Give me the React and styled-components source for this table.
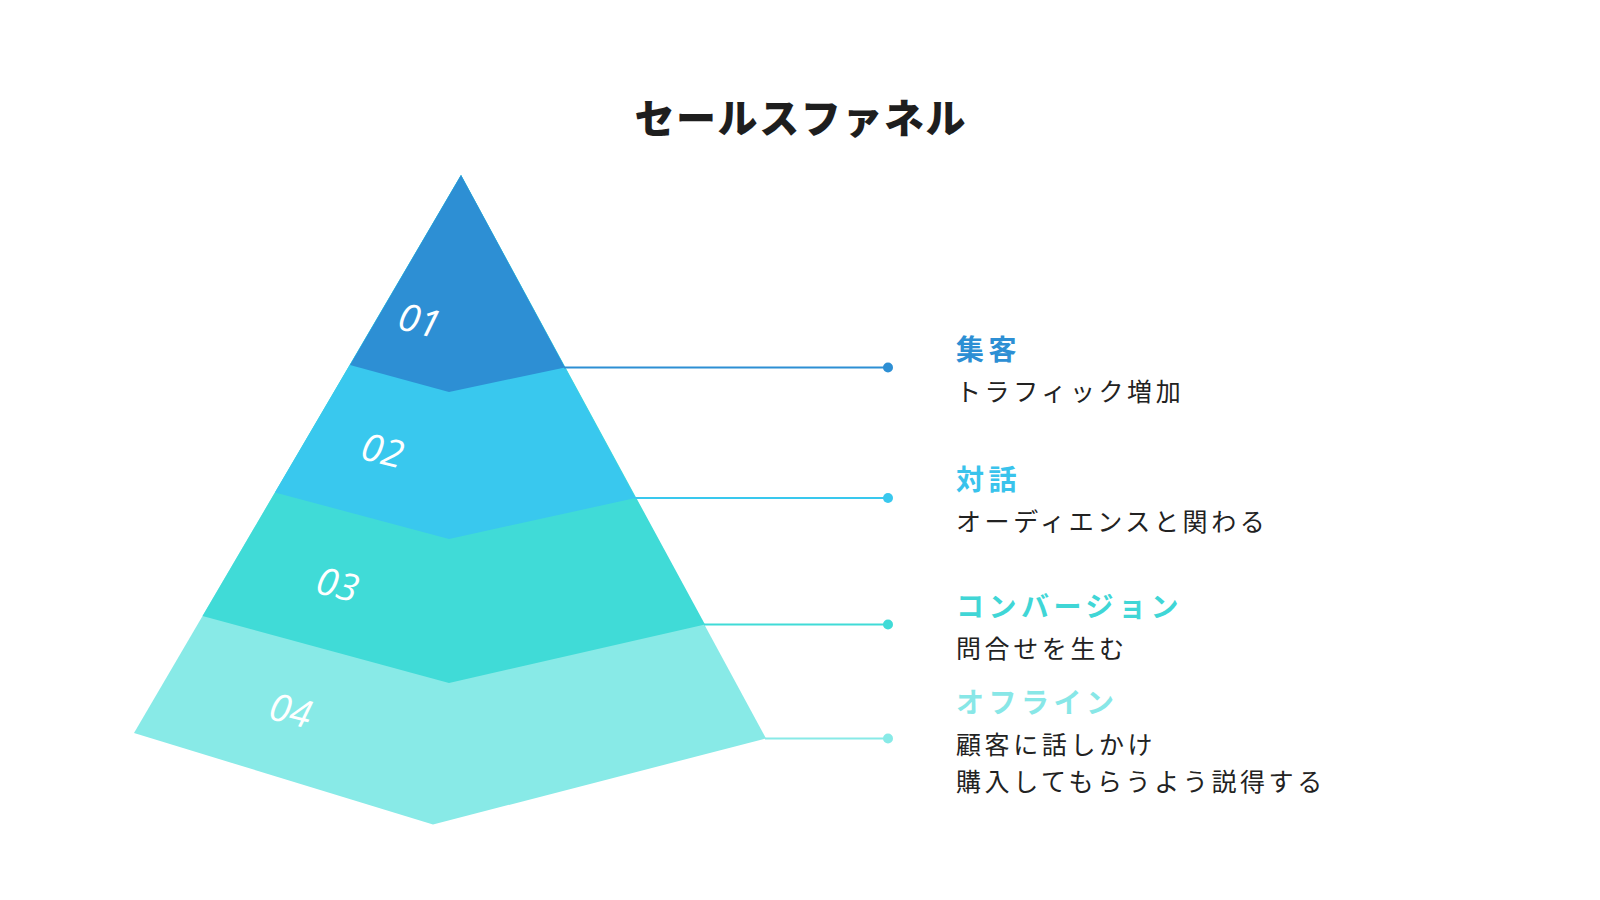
import React from 'react'
import styled, { createGlobalStyle } from 'styled-components'

const GlobalStyle = createGlobalStyle`
    html, body {
        margin: 0;
        padding: 0;
        background: #ffffff;
    }
    body {
        font-family: "Noto Sans CJK JP", "Noto Sans", sans-serif;
        color: #222222;
    }
`

const Page = styled.div`
    width: 1600px;
    height: 900px;
    display: flex;
    flex-direction: column;
    align-items: center;
    padding-top: 92px;
    box-sizing: border-box;
    overflow: hidden;
`

const Title = styled.h1`
    margin: 0;
    font-size: 40px;
    line-height: 48px;
    font-weight: 900;
    letter-spacing: 1.6px;
    padding-left: 1.6px;
    color: #1e1e1e;
`

const Diagram = styled.div`
    align-self: stretch;
    display: flex;
    flex-direction: row;
`

const Pyramid = styled.svg`
    display: block;
    width: 900px;
    height: 720px;
    flex-shrink: 0;
`

const StepNumber = styled.text`
    font-family: "Open Sans", "Noto Sans", sans-serif;
    font-style: italic;
    font-size: 38px;
    fill: #ffffff;
`

const Legend = styled.div`
    display: flex;
    flex-direction: column;
    margin-left: 56px;
    padding-top: 163px;
`

const LegendRow = styled.div`
    height: ${p => p.$h}px;
    display: flex;
    flex-direction: column;
    justify-content: center;
`

const Heading = styled.div`
    font-size: 28px;
    line-height: 42px;
    font-weight: 700;
    letter-spacing: 4.5px;
    color: ${p => p.$color};
    margin-bottom: 3px;
`

const Desc = styled.div`
    font-size: 25px;
    line-height: 37px;
    font-weight: 400;
    letter-spacing: 3.6px;
    color: #222222;
`

const apex = [461, 175]

const steps = [
    {
        no: '01',
        color: '#2d8fd4',
        textColor: '#2d8fd4',
        left: [350, 365], mid: [449, 392], right: [565, 367.5],
        label: [420, 319],
        title: '集客',
        desc: ['トラフィック増加'],
        h: 130,
    },
    {
        no: '02',
        color: '#39c8ee',
        textColor: '#39c3ec',
        left: [275, 492.5], mid: [449, 539], right: [635.5, 498],
        label: [383, 449],
        title: '対話',
        desc: ['オーディエンスと関わる'],
        h: 130,
    },
    {
        no: '03',
        color: '#40dbd7',
        textColor: '#40d6d6',
        left: [202.5, 616], mid: [449, 683], right: [705, 624.5],
        label: [338, 583],
        title: 'コンバージョン',
        desc: ['問合せを生む'],
        h: 124,
    },
    {
        no: '04',
        color: '#88eae7',
        textColor: '#88e7e7',
        left: [134, 733], mid: [433, 824.5], right: [766, 738.5],
        label: [291, 709],
        title: 'オフライン',
        desc: ['顧客に話しかけ', '購入してもらうよう説得する'],
        h: 104,
    },
]

const dotX = 888

const pts = (list) => list.map(p => p.join(',')).join(' ')

const App = () => {
    return (
        <Page>
            <GlobalStyle />
            <Title>セールスファネル</Title>
            <Diagram>
                <Pyramid viewBox="0 140 900 720">
                    {/* paint the bands bottom first, each from the apex down */}
                    {[...steps].reverse().map(s => (
                        <polygon key={s.no} points={pts([apex, s.right, s.mid, s.left])} fill={s.color} />
                    ))}
                    {steps.map(s => (
                        <g key={'c' + s.no}>
                            <line x1={s.right[0] - 1} y1={s.right[1]} x2={dotX} y2={s.right[1]} stroke={s.color} strokeWidth="2" />
                            <circle cx={dotX} cy={s.right[1]} r="5" fill={s.color} />
                        </g>
                    ))}
                    {steps.map(s => (
                        <StepNumber
                            key={'n' + s.no}
                            x={s.label[0]}
                            y={s.label[1]}
                            textAnchor="middle"
                            dominantBaseline="central"
                            transform={`rotate(14 ${s.label[0]} ${s.label[1]})`}
                        >
                            {s.no}
                        </StepNumber>
                    ))}
                </Pyramid>
                <Legend>
                    {steps.map(s => (
                        <LegendRow key={s.no} $h={s.h}>
                            <Heading $color={s.textColor}>{s.title}</Heading>
                            {s.desc.map(d => <Desc key={d}>{d}</Desc>)}
                        </LegendRow>
                    ))}
                </Legend>
            </Diagram>
        </Page>
    )
}

export default App
